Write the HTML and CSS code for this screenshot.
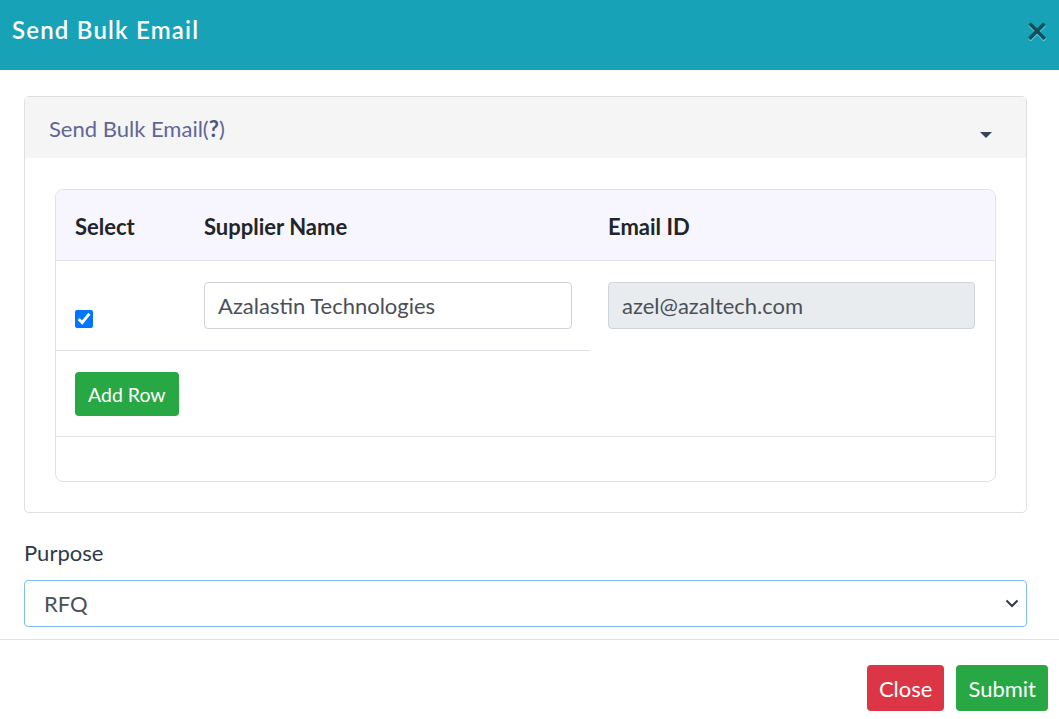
FILE: index.html
```html
<!DOCTYPE html>
<html lang="en">
<head>
  <meta charset="UTF-8" />
  <meta name="viewport" content="width=device-width, initial-scale=1.0"/>
  <title>Send Bulk Email</title>
  <link rel="stylesheet" href="styles.css">
</head>
<body>
  <div class="modal">
    <div class="modal-header">
      <h4 class="modal-title">Send Bulk Email</h4>
      <button class="close" type="button">&times;</button>
    </div>

    <div class="modal-body">
      <div class="card">
        <div class="card-header">
          <span>Send Bulk Email(<b>?</b>)</span>
          <span class="caret"></span>
        </div>
        <div class="card-body">
          <div class="supplier-table">
            <div class="row head">
              <div class="cell">Select</div>
              <div class="cell">Supplier Name</div>
              <div class="cell">Email ID</div>
            </div>
            <div class="row body-row">
              <div class="cell check-cell bordered">
                <input type="checkbox" checked>
              </div>
              <div class="cell bordered">
                <input class="form-control" type="text" value="Azalastin Technologies">
              </div>
              <div class="cell">
                <input class="form-control" type="text" value="azel@azaltech.com" readonly>
              </div>
            </div>
            <div class="row add-row">
              <button class="btn btn-success">Add Row</button>
            </div>
            <div class="row empty-row"></div>
          </div>
        </div>
      </div>

      <div class="form-group">
        <label for="purpose">Purpose</label>
        <div class="select-wrap">
          <select id="purpose" class="form-control">
            <option>RFQ</option>
          </select>
          <svg class="chevron" width="14" height="9" viewBox="0 0 14 9">
            <path d="M1.5 1.5 L7 7 L12.5 1.5" fill="none" stroke="#343a40" stroke-width="2"/>
          </svg>
        </div>
      </div>
    </div>

    <div class="modal-footer">
      <button class="btn btn-danger">Close</button>
      <button class="btn btn-success">Submit</button>
    </div>
  </div>
</body>
</html>
```

FILE: styles.css
```css
* {
  box-sizing: border-box;
}

body {
  font-family: Lato, "Open Sans", sans-serif;
  font-size: 22px;
  color: #212529;
  background: #fff;
  margin: 0;
  padding: 0;
}

.modal {
  width: 1059px;
  height: 719px;
  overflow: hidden;
}

.modal-header {
  background: #17a2b8;
  height: 70px;
  display: flex;
  align-items: center;
  justify-content: space-between;
  padding: 0 12px 12px;
}

.modal-title {
  margin: 0;
  color: #fff;
  font-size: 24px;
  font-weight: 600;
  letter-spacing: 1.2px;
}

.close {
  background: none;
  border: none;
  padding: 0;
  margin-right: -1px;
  margin-top: -1px;
  font-size: 38px;
  font-weight: bold;
  line-height: 1;
  color: #000;
  opacity: 0.5;
  text-shadow: 0 1px 0 #fff;
  font-family: Lato, sans-serif;
  cursor: pointer;
}

.modal-body {
  padding: 26px 32px 12px 24px;
}

.card {
  border: 1px solid #dfdfdf;
  border-radius: 5px;
}

.card-header {
  background: #f5f5f5;
  height: 61px;
  display: flex;
  align-items: center;
  justify-content: space-between;
  padding: 2px 34px 0 24px;
  color: #5d6798;
}

.card-header b {
  color: #4b5585;
}

.caret {
  width: 0;
  height: 0;
  border-left: 6px solid transparent;
  border-right: 6px solid transparent;
  border-top: 6px solid #36435a;
  margin-top: 13px;
}

.card-body {
  padding: 31px 30px 30px;
}

.supplier-table {
  border: 1px solid #e1e2e6;
  border-radius: 8px;
  overflow: hidden;
}

.row {
  display: grid;
  grid-template-columns: 128px 406px 1fr;
}

.cell {
  padding: 0 20px;
}

.head {
  background: #f7f6fe;
  height: 71px;
  align-items: center;
  font-weight: bold;
  border-bottom: 1px solid #dee2e6;
  padding-top: 3px;
}

.head .cell:first-child {
  padding-left: 19px;
}

.head .cell:nth-child(3) {
  padding-left: 18px;
}

.body-row .cell {
  padding-top: 21px;
  padding-bottom: 21px;
}

.body-row .cell:nth-child(2) {
  padding-right: 18px;
}

.body-row .cell:nth-child(3) {
  padding-left: 18px;
}

.bordered {
  border-bottom: 1px solid #dee2e6;
}

.check-cell {
  display: flex;
  align-items: flex-end;
  padding-left: 19px !important;
  padding-bottom: 22px !important;
}

.check-cell input {
  width: 18px;
  height: 18px;
  margin: 0;
  accent-color: #0075ff;
}

.form-control {
  width: 100%;
  height: 47px;
  border: 1px solid #ced4da;
  border-radius: 4px;
  padding: 0 13px;
  font-family: Lato, sans-serif;
  font-size: 22px;
  color: #495057;
  background: #fff;
}

.form-control[readonly] {
  background: #e9ecef;
}

.add-row {
  display: block;
  padding: 21px 0 20px 19px;
  border-bottom: 1px solid #dee2e6;
}

.empty-row {
  height: 44px;
}

.btn {
  border: none;
  border-radius: 4px;
  color: #fff;
  font-family: Lato, sans-serif;
  font-size: 22px;
  height: 46px;
  padding: 0 12px;
  cursor: pointer;
}

.add-row .btn {
  height: 44px;
  padding: 0 13px;
  font-size: 19.5px;
}

.btn-success {
  background: #28a745;
}

.btn-danger {
  background: #dc3545;
}

.form-group {
  margin-top: 27px;
}

.form-group label {
  display: block;
  color: #2e3a4b;
  line-height: 26px;
  margin-bottom: 14px;
}

.select-wrap {
  position: relative;
}

.select-wrap select {
  appearance: none;
  border-color: #80bdff;
  padding-left: 19px;
}

.chevron {
  position: absolute;
  right: 8px;
  top: 19px;
}

.modal-footer {
  border-top: 1px solid #dee2e6;
  display: flex;
  justify-content: flex-end;
  gap: 12px;
  padding: 25px 11px 0;
}
```
